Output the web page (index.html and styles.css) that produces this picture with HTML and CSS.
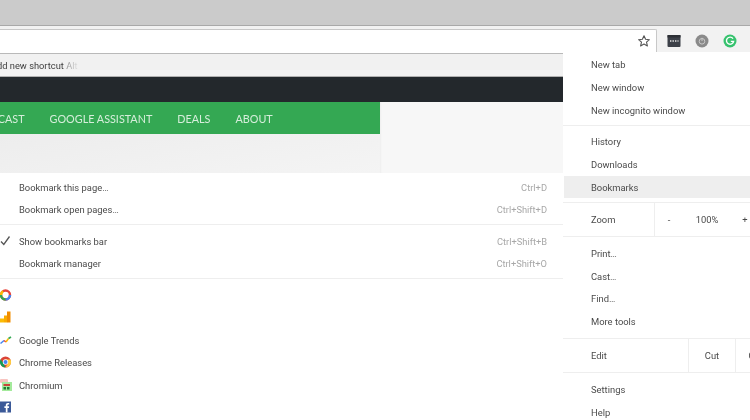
FILE: index.html
```html
<!DOCTYPE html>
<html lang="en">
<head>
<meta charset="utf-8">
<title>Chrome bookmarks menu</title>
<link rel="stylesheet" href="styles.css">
</head>
<body>
<div class="screen">
  <div class="titlebar"></div>
  <div class="toolbar">
    <div class="omnibox">
      <svg class="star" viewBox="0 0 14 14" width="14" height="14"><path d="M7 1.800l1.600 3.500 3.800.4-2.900 2.500.9 3.700L7 10l-3.400 1.900.9-3.700L1.600 5.700l3.800-.4z" fill="none" stroke="#555" stroke-width="1.100" stroke-linejoin="round"/></svg>
    </div>
    <div class="extensions">
      <svg viewBox="0 0 14 14" width="14" height="14"><rect x="0.500" y="1" width="13" height="12" rx="1" fill="#3c4048"/><rect x="0.500" y="1" width="13" height="2.500" fill="#2c2f35"/><path d="M3 7h1.400M5.500 7h1.400M8 7h1.400M10.500 7h1" stroke="#e8e8e8" stroke-width="1.600"/></svg>
      <svg viewBox="0 0 14 14" width="14" height="14"><circle cx="7" cy="7" r="6.500" fill="#8a8a8a"/><circle cx="7" cy="7.300" r="2.800" fill="none" stroke="#c9c9c9" stroke-width="1"/><path d="M7 3.800v3.200" stroke="#c9c9c9" stroke-width="1"/></svg>
      <svg viewBox="0 0 14 14" width="14" height="14"><circle cx="7" cy="7" r="6.500" fill="#36c26e"/><path d="M10 4.600A3.600 3.600 0 1 0 10.600 7.400H7.800" fill="none" stroke="#fff" stroke-width="1.400"/></svg>
    </div>
  </div>
  <div class="bookmarkbar"><span class="shortcut-hint">dd new shortcut <span class="fade">Alt</span></span></div>
  <div class="darkbar"></div>
  <div class="page">
    <div class="leftcol">
      <nav class="sitenav">
        <a>PODCAST</a><a>GOOGLE ASSISTANT</a><a>DEALS</a><a>ABOUT</a>
      </nav>
      <div class="hero"></div>
    </div>
    <div class="aside"></div>
  </div>

  <div class="submenu">
    <div class="group">
      <div class="row"><span class="label">Bookmark this page…</span><span class="keys">Ctrl+D</span></div>
      <div class="row"><span class="label">Bookmark open pages…</span><span class="keys">Ctrl+Shift+D</span></div>
    </div>
    <div class="group">
      <div class="row"><svg class="lead" viewBox="0 0 12 12" width="12" height="12"><path d="M1 6.500l2.800 3L9.500 1.500" fill="none" stroke="#555" stroke-width="1.300"/></svg><span class="label">Show bookmarks bar</span><span class="keys">Ctrl+Shift+B</span></div>
      <div class="row"><span class="label">Bookmark manager</span><span class="keys">Ctrl+Shift+O</span></div>
    </div>
    <div class="group last">
      <div class="row"><svg class="lead" viewBox="0 0 12 12" width="12" height="12"><circle cx="5.500" cy="6" r="4.500" fill="none" stroke="#e8453c" stroke-width="2.400"/><path d="M10 6A4.500 4.500 0 0 1 5.500 10.500" fill="none" stroke="#4285f4" stroke-width="2.400"/><path d="M5.500 10.500A4.500 4.500 0 0 1 1 6" fill="none" stroke="#34a853" stroke-width="2.400"/><path d="M1 6A4.500 4.500 0 0 1 3 2.300" fill="none" stroke="#fbbc05" stroke-width="2.400"/></svg></div>
      <div class="row"><svg class="lead" viewBox="0 0 12 12" width="12" height="12"><path d="M0 7.500h4V11.500H0z" fill="#fbbc05"/><path d="M4 4.500h3.200v7H4z" fill="#f9ab00"/><path d="M7 .5h3.500v11H7z" fill="#f08c00"/></svg></div>
      <div class="row"><svg class="lead" viewBox="0 0 12 12" width="12" height="12"><path d="M.5 9.500L4 6.500" stroke="#4285f4" stroke-width="1.500"/><path d="M4 6.500L6 8" stroke="#ea4335" stroke-width="1.500"/><path d="M6 8L8.500 4.500" stroke="#fbbc05" stroke-width="1.500"/><path d="M8.500 4.500L11 3" stroke="#34a853" stroke-width="1.700"/></svg><span class="label">Google Trends</span></div>
      <div class="row"><svg class="lead" viewBox="0 0 12 12" width="12" height="12"><circle cx="5.500" cy="6" r="5.500" fill="#db4437"/><path d="M5.500 11.500A5.500 5.500 0 0 1 .7 3.300L3.500 7.500l2 4z" fill="#0f9d58"/><path d="M5.500 3.500H10.500A5.500 5.500 0 0 1 5.500 11.500L8 7z" fill="#ffcd40"/><circle cx="5.500" cy="6" r="2.700" fill="#fff"/><circle cx="5.500" cy="6" r="2" fill="#4285f4"/></svg><span class="label">Chrome Releases</span></div>
      <div class="row"><svg class="lead" viewBox="0 0 12 12" width="12" height="12"><rect x="0" y="0" width="8" height="4" rx="1" fill="#f8c4c0"/><rect x="2" y="3" width="10" height="9" fill="#a4ea9c"/><rect x="3.500" y="5" width="6.500" height="2" fill="#c9453c"/><rect x="3.500" y="8" width="2.500" height="2.500" fill="#1e7b34"/><rect x="7" y="8" width="2.500" height="2.500" fill="#1e7b34"/></svg><span class="label">Chromium</span></div>
      <div class="row"><svg class="lead" viewBox="0 0 12 12" width="12" height="12"><rect x="0" y="0.500" width="11" height="11" fill="#3b5998"/><path d="M7.500 11.500V7h1.400l.2-1.700H7.500V4.300c0-.5.200-.8.800-.8h.9V2c-.3 0-.8-.1-1.300-.1-1.300 0-2.100.8-2.100 2.200v1.200H4.400V7h1.400v4.500z" fill="#fff"/></svg></div>
    </div>
  </div>

  <div class="mainmenu">
    <div class="group">
      <div class="mrow">New tab</div>
      <div class="mrow">New window</div>
      <div class="mrow">New incognito window</div>
    </div>
    <div class="group">
      <div class="mrow">History</div>
      <div class="mrow">Downloads</div>
      <div class="mrow active">Bookmarks</div>
    </div>
    <div class="cells">
      <span class="cell-name">Zoom</span>
      <div class="zoomcells"><span class="zbtn">-</span><span class="zval">100%</span><span class="zbtn">+</span></div>
    </div>
    <div class="group tools">
      <div class="mrow">Print…</div>
      <div class="mrow">Cast…</div>
      <div class="mrow">Find…</div>
      <div class="mrow">More tools</div>
    </div>
    <div class="cells">
      <span class="cell-name edit">Edit</span>
      <div class="editcells"><span class="ecell">Cut</span><span class="ecell">Copy</span></div>
    </div>
    <div class="group last">
      <div class="mrow">Settings</div>
      <div class="mrow">Help</div>
    </div>
  </div>
</div>
</body>
</html>
```

FILE: styles.css
```css
* { box-sizing: border-box; }
html, body { margin: 0; padding: 0; }
body { width: 750px; height: 420px; overflow: hidden; background: #fff; font-family: Roboto, "Liberation Sans", sans-serif; }
.screen { position: relative; width: 750px; height: 420px; overflow: hidden; display: flex; flex-direction: column; filter: blur(0.4px); }

.titlebar { height: 26px; flex: none; background: #cbcbcb; border-bottom: 1px solid #a9a9a9; }
.toolbar { height: 28px; flex: none; display: flex; background: #f2f2f2; padding-top: 3px; border-bottom: 1px solid #b9b9b9; }
.omnibox { width: 657px; flex: none; background: #fff; border: 1px solid #c8c8c8; border-left: 0; border-bottom: 0; border-top-right-radius: 2px; display: flex; align-items: center; justify-content: flex-end; padding: 0 5px 2px 0; }
.extensions { display: flex; gap: 14px; padding: 5px 0 0 10px; align-items: flex-start; }
.bookmarkbar { height: 23px; flex: none; background: #f1f1f1; border-bottom: 1px solid #b0b0b0; display: flex; align-items: center; font-size: 9.300px; color: #3e3e3e; overflow: hidden; }
.shortcut-hint { margin-left: -3px; white-space: nowrap; }
.fade { background: linear-gradient(90deg, #8a8a8a, #e4e4e4); -webkit-background-clip: text; background-clip: text; color: transparent; }
.darkbar { height: 25px; flex: none; background: #23282c; }
.page { flex: 1; background: #fff; overflow: hidden; display: flex; align-items: flex-start; }
.leftcol { width: 380px; flex: none; }
.aside { width: 183px; height: 71px; flex: none; background: #f7f7f7; box-shadow: inset 2px 0 2px -1px rgba(0,0,0,.04); }
.sitenav { height: 32px; background: #34a853; display: flex; align-items: center; gap: 25px; color: #d6eedb; font-family: Lato, sans-serif; font-size: 10.800px; overflow: hidden; }
.sitenav a { white-space: nowrap; flex: none; }
.sitenav a:first-child { margin-left: -25.500px; }
.hero { height: 39px; background: linear-gradient(170deg, #ededed, #f4f4f4); }

.submenu { position: absolute; left: 0; top: 173px; width: 563px; height: 247px; background: #fff; padding-top: 2.750px; }
.group { display: flex; flex-direction: column; padding-bottom: 3px; margin-bottom: 5px; border-bottom: 1px solid #eeeeee; }
.group.last { border-bottom: 0; margin-bottom: 0; padding-bottom: 0; }
.row { position: relative; height: 22.500px; flex: none; display: flex; align-items: center; justify-content: space-between; padding: 0 16px 0 19px; font-size: 9.400px; color: #4a4a4a; }
.keys { color: #a8a8a8; font-size: 9.300px; }
.lead { position: absolute; left: 0; top: 5px; }

.mainmenu { position: absolute; left: 563px; top: 52px; width: 187px; height: 368px; background: #fff; padding-top: 1.700px; font-size: 9.400px; color: #4a4a4a; }
.mrow { height: 22.600px; flex: none; display: flex; align-items: center; padding-left: 28px; }
.mrow.active { background: #eeeeee; margin-left: 1px; padding-left: 27px; }
.mainmenu .group { padding-bottom: 3.500px; margin-bottom: 4.700px; }
.mainmenu .group.tools { padding-bottom: 5.500px; margin-bottom: 0; }
.mainmenu .group.last { margin-bottom: 0; padding-bottom: 0; }
.cells { height: 34px; margin-bottom: 5.200px; border-bottom: 1px solid #eeeeee; display: flex; align-items: stretch; padding-left: 28px; }
.group + .cells { margin-top: -4.700px; }
.group.tools + .cells { margin-top: 0; }
.cell-name { width: 63px; flex: none; display: flex; align-items: center; }
.cell-name.edit { width: 97px; }
.zoomcells { flex: 1; display: flex; align-items: center; border-left: 1px solid #eeeeee; }
.zbtn { width: 28px; text-align: center; }
.zval { width: 48px; text-align: center; }
.editcells { flex: 1; display: flex; }
.ecell { width: 47px; flex: none; display: flex; align-items: center; justify-content: center; border-left: 1px solid #eeeeee; }
```
